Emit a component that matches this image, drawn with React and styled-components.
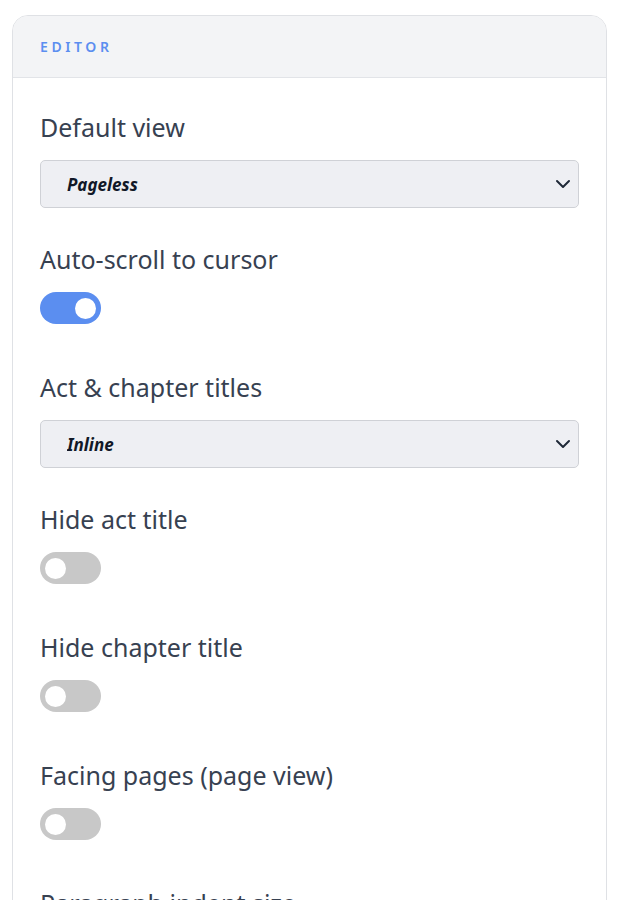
import React, { useState } from 'react';
import styled, { createGlobalStyle } from 'styled-components';

const GlobalStyle = createGlobalStyle`
  body {
    margin: 0;
    background: #ffffff;
    font-family: "Noto Sans", "Open Sans", sans-serif;
  }
`;

const Page = styled.div`
  padding: 15px 15px 0 12px;
  height: 900px;
  overflow: hidden;
  box-sizing: border-box;
`;

const Card = styled.section`
  border: 1px solid #dfe1e5;
  border-radius: 16px;
  background: #ffffff;
  overflow: hidden;
`;

const CardHeader = styled.header`
  background: #f3f4f6;
  border-bottom: 1px solid #e2e4e8;
  height: 61px;
  display: flex;
  align-items: center;
  padding: 0 27px;
`;

const HeaderTitle = styled.h3`
  margin: 0;
  font-size: 14px;
  font-weight: 600;
  letter-spacing: 3.6px;
  color: #5b8ef0;
`;

const CardBody = styled.div`
  padding: 32px 27px 60px 27px;
  display: flex;
  flex-direction: column;
`;

const Field = styled.div`
  display: flex;
  flex-direction: column;
  margin-bottom: ${(p) => (p.$toggle ? '46px' : '34px')};
`;

const Label = styled.label`
  font-size: 25px;
  line-height: 34px;
  color: #374151;
  margin-bottom: 16px;
`;

const SelectWrap = styled.div`
  position: relative;
  height: 48px;
`;

const Select = styled.select`
  appearance: none;
  width: 100%;
  height: 48px;
  box-sizing: border-box;
  border: 1px solid #cfd1d6;
  border-radius: 5px;
  background: #eeeff3;
  padding: 0 40px 0 26px;
  font-family: "Noto Sans", "Open Sans", sans-serif;
  font-size: 17px;
  font-weight: 700;
  font-style: italic;
  color: #111827;
  outline: none;
`;

const Chevron = styled.svg`
  position: absolute;
  right: 8px;
  top: 17px;
  pointer-events: none;
`;

const Switch = styled.button`
  width: 61px;
  height: 32px;
  border: none;
  border-radius: 16px;
  padding: 0;
  background: ${(p) => (p.$on ? '#5b8ef0' : '#c8c8c8')};
  position: relative;
  cursor: pointer;

  &::after {
    content: '';
    position: absolute;
    top: 5.5px;
    left: ${(p) => (p.$on ? '35px' : '5px')};
    width: 21px;
    height: 21px;
    border-radius: 50%;
    background: #ffffff;
  }
`;

const SelectField = ({ label, value, options }) => (
  <Field>
    <Label>{label}</Label>
    <SelectWrap>
      <Select defaultValue={value}>
        {options.map((o) => (
          <option key={o}>{o}</option>
        ))}
      </Select>
      <Chevron width="16" height="14" viewBox="0 0 16 14">
        <path d="M2 4 L8 10 L14 4" fill="none" stroke="#1f2937" strokeWidth="2" strokeLinecap="round" strokeLinejoin="round" />
      </Chevron>
    </SelectWrap>
  </Field>
);

const ToggleField = ({ label, initial }) => {
  const [on, setOn] = useState(initial);
  return (
    <Field $toggle>
      <Label>{label}</Label>
      <Switch $on={on} onClick={() => setOn(!on)} aria-pressed={on} />
    </Field>
  );
};

const App = () => (
  <>
    <GlobalStyle />
    <Page>
      <Card>
        <CardHeader>
          <HeaderTitle>EDITOR</HeaderTitle>
        </CardHeader>
        <CardBody>
          <SelectField label="Default view" value="Pageless" options={['Pageless', 'Page']} />
          <ToggleField label="Auto-scroll to cursor" initial={true} />
          <SelectField label="Act & chapter titles" value="Inline" options={['Inline', 'Separate page']} />
          <ToggleField label="Hide act title" initial={false} />
          <ToggleField label="Hide chapter title" initial={false} />
          <ToggleField label="Facing pages (page view)" initial={false} />
          <SelectField label="Paragraph indent size" value="Medium" options={['Small', 'Medium', 'Large']} />
        </CardBody>
      </Card>
    </Page>
  </>
);

export default App;
